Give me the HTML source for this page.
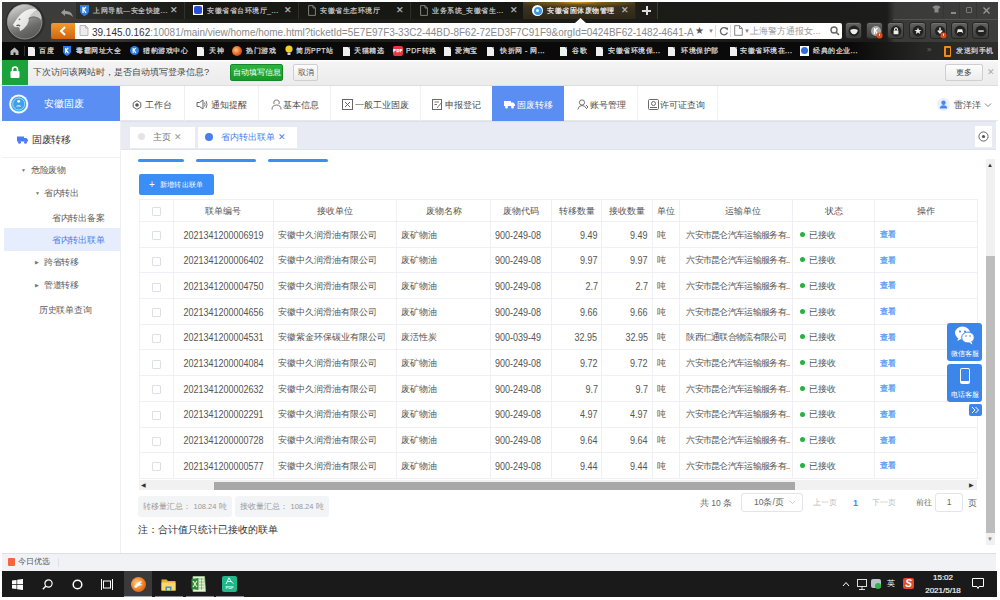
<!DOCTYPE html>
<html><head><meta charset="utf-8">
<style>
*{margin:0;padding:0;box-sizing:border-box}
html,body{width:1000px;height:600px;overflow:hidden;background:#fff;font-family:"Liberation Sans",sans-serif;}
.a{position:absolute}
/* chrome */
#chrome{left:2px;top:2px;width:996px;height:40px;background:linear-gradient(90deg,#41413f 0,#3c3c3a 90px,#262624 150px,#1e1e1b 200px,#1a1a17 600px,#1c1c1a 885px,#3a3a38 893px,#3e3e3c 996px)}
.tab{top:0;height:17px;-webkit-text-stroke:0.2px;background:rgba(12,12,10,0.3);border-right:1px solid rgba(255,255,255,0.1);color:#c8c8c8;font-size:7px;letter-spacing:0.5px;line-height:17px;white-space:nowrap;overflow:hidden}
.tab .x{position:absolute;right:6px;top:0;color:#bbb;font-size:9px;letter-spacing:0}
#bm{left:2px;top:42px;width:996px;height:18px;-webkit-text-stroke:0.25px;background:linear-gradient(90deg,#0a0a0a 0,#0a0a0a 850px,#262624 920px,#2e2e2c 996px);color:#d8d8d8;font-size:7px;letter-spacing:0.5px;line-height:18px;white-space:nowrap}
.bi{position:absolute;top:0}
.doc{position:absolute;top:5px;left:0;width:7px;height:9px;background:linear-gradient(225deg,#9a9a9a 0,#9a9a9a 1.8px,#f0f0f0 2px)}
#pw{left:2px;top:60px;width:996px;height:26px;background:linear-gradient(180deg,#fdfdfd 0,#fdfdfd 1px,#f5f4f4 2px,#ececec 24px);border-bottom:1px solid #dedede}
#hdr{left:2px;top:86px;width:996px;height:35px;background:#fff;border-bottom:1px solid #e4e7ee}
.nav{position:absolute;top:1.5px;height:35px;line-height:35px;font-size:9px;color:#4a4a4a;white-space:nowrap}
.sep{position:absolute;top:0;width:1px;height:35px;background:#f0f0f0}
#side{left:2px;top:121px;width:119px;height:432px;background:#fff;border-right:1px solid #eef0f3;z-index:2}
.si{position:absolute;font-size:9px;letter-spacing:-0.3px;color:#606060;white-space:nowrap;line-height:14px}
#main{left:120px;top:121px;width:876px;height:432px;background:#fff}
#tabs{left:0;top:0;width:876px;height:29px;background:#e8ebf3;box-shadow:inset 0 1px 1px #dde0e7,inset 0 -1px 1px #e0e3ea}
table{border-collapse:collapse;table-layout:fixed}
#status{left:2px;top:553px;width:994px;height:18px;background:#f1f2f6;border-top:1px solid #dcdfe5}
#task{left:2px;top:571px;width:995px;height:26px;background:#1a1a1a}

#tbl td{border:1px solid #eef0f5;height:25.7px;font-size:9px;color:#555;white-space:nowrap;overflow:hidden;padding:1.5px 4px 0 4px;text-overflow:clip}
#tbl tr.th td{height:22px;color:#555}
#tbl td.c{text-align:center}
#tbl .n{display:inline-block;font-size:10px;transform:scaleX(0.9);transform-origin:50% 50%}
#tbl td.r .n{transform-origin:100% 50%}
#tbl td.r{text-align:right}
#tbl td.cd{padding-left:4px}
#tbl td.cd .n{transform-origin:0 50%}
#tbl td.st{padding-left:7px}
#tbl td.ys{letter-spacing:-0.7px;padding-left:6px}
#tbl td.lk{color:#5a9cf6;font-size:7.5px;padding-left:5px;-webkit-text-stroke:0.35px}
.cb{display:inline-block;width:9px;height:9px;border:1px solid #dcdfe6;border-radius:1px;vertical-align:middle}
.dot{display:inline-block;width:5px;height:5px;border-radius:50%;background:#28b040;margin-right:4px;vertical-align:middle;margin-top:-2px}
</style></head><body>
<!-- browser chrome -->
<div id="chrome" class="a">
  <!-- logo -->
  <div class="a" style="left:0;top:0;width:73px;height:17px;background:#3c3c3a"></div>
  <div class="a" style="left:0;top:17px;width:49px;height:23px;background:#3a3a38"></div>
  <svg class="a" style="left:-2px;top:-2px" width="50" height="44" viewBox="0 0 50 44">
    <defs>
      <linearGradient id="lg" x1="0.15" y1="0.05" x2="0.55" y2="1"><stop offset="0" stop-color="#d2d2d0"/><stop offset="0.4" stop-color="#9a9a98"/><stop offset="0.75" stop-color="#6a6a68"/><stop offset="1" stop-color="#5a5a58"/></linearGradient>
      <linearGradient id="lh" x1="0" y1="0" x2="1" y2="1"><stop offset="0" stop-color="#ffffff"/><stop offset="1" stop-color="#d0d0ce"/></linearGradient>
    </defs>
    <circle cx="25.2" cy="22" r="19.6" fill="#2e2e2c"/>
    <circle cx="24.7" cy="21.7" r="17.3" fill="url(#lg)" stroke="#a5a5a3" stroke-width="0.7"/>
    <path d="M26 11 Q34 7.5 39 11.5 Q42 15 41 20.5 Q38 16.5 33 16.5 Q29 17 27 19.5 Z" fill="#c8c8c6"/>
    <path d="M13 24.8 L15 21.5 L18 17.3 L21.5 13.5 L25 11 L29.5 9 L34 8.5 L37 9.5 L34 11.5 L31 14.5 L29 18 L28.5 21.5 L27 25 L23.5 29 L20 31.2 L19.5 28 L18 26.8 L16 27.3 L14.3 26.5 Z" fill="url(#lh)"/>
    <path d="M28.5 18.5 Q34 15 40.5 19.5" stroke="#6a6a68" stroke-width="0.9" fill="none"/>
    <circle cx="19.5" cy="19.3" r="0.9" fill="#777"/>
    <path d="M16.5 25.8 Q18.5 24.3 20 26.2" stroke="#555" stroke-width="1.3" fill="none"/>
  </svg>
  <!-- back arrow -->
  <svg class="a" style="left:58px;top:6px" width="14" height="10" viewBox="0 0 14 10"><path d="M5 1 L1 4.5 L5 8 L5 6 C9 6 11 7 13 9 C12 5 10 3 5 3 Z" fill="#9a9a9a"/></svg>
  <!-- tabs -->
  <div class="a tab" style="left:74px;width:109px">
    <svg class="a" style="left:4px;top:3px" width="9" height="11" viewBox="0 0 9 11"><path d="M0 0 H9 V6 C9 9 4.5 11 4.5 11 C4.5 11 0 9 0 6Z" fill="#2f7de1"/><path d="M3 2 V8 M3 5 L6 2 M3.8 4.5 L6 8" stroke="#fff" stroke-width="1.3" fill="none"/></svg>
    <span class="a" style="left:17px;top:0">上网导航—安全快捷...</span><span class="x">&#x2715;</span></div>
  <div class="a tab" style="left:183px;width:114px">
    <div class="a" style="left:8px;top:3px;width:10px;height:10px;background:#fff"><div class="a" style="left:1px;top:1px;width:8px;height:8px;background:#2d4fd6;border-radius:2px"></div></div>
    <span class="a" style="left:22px;top:0">安徽省省台环境厅_...</span><span class="x">&#x2715;</span></div>
  <div class="a tab" style="left:297px;width:112px">
    <svg class="a" style="left:9px;top:3px" width="8" height="11" viewBox="0 0 8 11"><path d="M0.6 0.6H5L7.4 3V10.4H0.6Z" fill="none" stroke="#8a8a88" stroke-width="0.9"/><path d="M5 0.6V3H7.4" stroke="#8a8a88" stroke-width="0.9" fill="none"/></svg>
    <span class="a" style="left:21px;top:0">安徽省生态环境厅</span><span class="x">&#x2715;</span></div>
  <div class="a tab" style="left:409px;width:114px">
    <svg class="a" style="left:9px;top:3px" width="8" height="11" viewBox="0 0 8 11"><path d="M0.6 0.6H5L7.4 3V10.4H0.6Z" fill="none" stroke="#8a8a88" stroke-width="0.9"/><path d="M5 0.6V3H7.4" stroke="#8a8a88" stroke-width="0.9" fill="none"/></svg>
    <span class="a" style="left:21px;top:0">业务系统_安徽省生...</span><span class="x">&#x2715;</span></div>
  <div class="a tab" style="left:521px;width:113px;background:radial-gradient(ellipse 60px 6px at 50% 0,#d8a520 0,rgba(150,110,30,0.6) 40%,rgba(0,0,0,0) 100%),linear-gradient(180deg,#4a3c1c 0,#3a3020 6px,#2e2818 17px);border-right:1px solid #222;color:#f0f0f0">
    <div class="a" style="left:9px;top:3px;width:11px;height:11px;border-radius:50%;background:#fff"><div class="a" style="left:1.5px;top:1.5px;width:8px;height:8px;border-radius:50%;background:#3a9ae8"></div><div class="a" style="left:4px;top:4px;width:3px;height:3px;border-radius:50%;background:#dff"></div></div>
    <span class="a" style="left:24px;top:0">安徽省固体废物管理</span><span class="x">&#x2715;</span></div>
  <div class="a" style="left:634px;top:0;width:22px;height:17px;background:#1e1d18;border-right:1px solid #3a3a36"></div><div class="a" style="left:639px;top:3px;width:11px;height:11px"><div class="a" style="left:4.5px;top:1px;width:2px;height:9px;background:#ddd"></div><div class="a" style="left:1px;top:4.5px;width:9px;height:2px;background:#ddd"></div></div>
  <svg class="a" style="left:573px;top:16px" width="11" height="5" viewBox="0 0 11 5"><path d="M0 5L5.5 0L11 5Z" fill="#fff"/></svg>
  <!-- window controls -->
  <svg class="a" style="left:930px;top:3px" width="9" height="8" viewBox="0 0 9 8"><path d="M0.5 2L3 0.5H6L8.5 2L7.5 3.5H6.5V7.5H2.5V3.5H1.5Z" fill="#8a8a88"/></svg>
  <div class="a" style="left:941px;top:0;width:1px;height:16px;background:#353533"></div>
  <div class="a" style="left:949px;top:10px;width:5px;height:2px;background:#8a8a88"></div>
  <div class="a" style="left:957px;top:0;width:1px;height:16px;background:#353533"></div>
  <div class="a" style="left:964px;top:5px;width:6px;height:6px;border:1.5px solid #7a7a78;border-radius:1px"></div>
  <div class="a" style="left:974px;top:0;width:1px;height:16px;background:#353533"></div>
  <svg class="a" style="left:981px;top:5px" width="7" height="7" viewBox="0 0 7 7"><path d="M0.5 0.5L6.5 6.5M6.5 0.5L0.5 6.5" stroke="#9a9a98" stroke-width="1.3"/></svg>
  <!-- address row -->
  <div class="a" style="left:49px;top:21px;width:24px;height:16px;background:linear-gradient(180deg,#f39a2c,#d2650c);border-radius:2px 0 0 2px"></div>
  <svg class="a" style="left:56px;top:24px" width="10" height="10" viewBox="0 0 10 10"><path d="M7 1 L3 5 L7 9" stroke="#fff" stroke-width="2" fill="none"/></svg>
  <div class="a" style="left:73px;top:21px;width:767px;height:16px;background:#fff;border-radius:0 2px 2px 0"></div>
  <svg class="a" style="left:77px;top:23px" width="10" height="11" viewBox="0 0 10 11"><path d="M1 0.5H6.5L9 3V10.5H1Z" fill="#ececec" stroke="#aaa" stroke-width="0.8"/><path d="M6.5 0.5V3H9" stroke="#aaa" stroke-width="0.8" fill="none"/></svg>
  <div class="a" id="url" style="left:89.5px;top:22px;height:16px;line-height:16px;font-size:11px;color:#8a8a8a;white-space:nowrap;transform:scaleX(0.906);transform-origin:0 0"><span style="color:#333">39.145.0.162</span>:10081/main/view/home/home.html?ticketId=5E7E97F3-33C2-44BD-8F62-72ED3F7C91F9&amp;orgId=0424BF62-1482-4641-A</div>
    <div class="a" style="left:693px;top:21px;color:#555;font-size:10px;line-height:16px">&#x2605;</div>
  <div class="a" style="left:706px;top:21px;color:#888;font-size:6px;line-height:16px">&#x25BC;</div>
  <div class="a" style="left:713px;top:23px;width:1px;height:12px;background:#ddd"></div>
  <svg class="a" style="left:717px;top:24px" width="10" height="10" viewBox="0 0 10 10"><path d="M8 3.2A3.6 3.6 0 1 0 8.4 6.5" stroke="#666" stroke-width="1.3" fill="none"/><path d="M6.2 1.5L9.2 1.8L8.6 4.6Z" fill="#666"/></svg>
  <div class="a" style="left:728px;top:23px;width:1px;height:12px;background:#ddd"></div>
  <svg class="a" style="left:732px;top:23px" width="9" height="11" viewBox="0 0 9 11"><path d="M0.7 0.7H5.5L8.3 3.5V10.3H0.7Z" fill="#fff" stroke="#777" stroke-width="0.9"/><path d="M5.5 0.7V3.5H8.3" stroke="#777" stroke-width="0.9" fill="none"/></svg>
  <div class="a" style="left:742px;top:21px;color:#888;font-size:6px;line-height:16px">&#x25BC;</div>
  <div class="a" style="left:748px;top:21px;height:16px;line-height:16px;font-size:9px;color:#9a9a9a;white-space:nowrap">上海警方通报女...</div>
  <svg class="a" style="left:828px;top:24px" width="10" height="10" viewBox="0 0 10 10"><circle cx="4" cy="4" r="3" stroke="#666" stroke-width="1.4" fill="none"/><path d="M6.2 6.2 L9 9" stroke="#666" stroke-width="1.6"/></svg>
  <!-- toolbar buttons -->
  <div class="a" style="left:891px;top:17px;width:105px;height:1px;background:#545452"></div>
  <div class="a" style="left:843px;top:20px;width:17px;height:17px;border-radius:3px;background:linear-gradient(180deg,#626260,#3c3c3a);border:1px solid #262624;box-shadow:inset 0 1px 0 rgba(255,255,255,0.12)"><svg class="a" style="left:2px;top:2px" width="12" height="12" viewBox="-0.5 -0.5 11 11"><circle cx="5" cy="5" r="5" fill="#222"/><path d="M1.5 4 Q5 2.5 8.5 4 Q8 7.5 5 8 Q2 7.5 1.5 4Z" fill="#eee"/></svg></div>
  <div class="a" style="left:864px;top:20px;width:17px;height:17px;border-radius:3px;background:linear-gradient(180deg,#626260,#3c3c3a);border:1px solid #262624;box-shadow:inset 0 1px 0 rgba(255,255,255,0.12)"><svg class="a" style="left:3px;top:2px" width="14" height="14" viewBox="0 0 14 14"><circle cx="6" cy="6" r="5" fill="#aaa"/><path d="M4.5 3V9M4.5 6L7.5 3M5.3 5.5L7.5 9" stroke="#fff" stroke-width="1.2" fill="none"/><circle cx="9.5" cy="10.5" r="3" fill="#e04a1a"/><rect x="9" y="8.7" width="1" height="2.2" fill="#fff"/></svg></div>
  <div class="a" style="left:885px;top:20px;width:17px;height:17px;border-radius:3px;background:linear-gradient(180deg,#626260,#3c3c3a);border:1px solid #262624;box-shadow:inset 0 1px 0 rgba(255,255,255,0.12)"><svg class="a" style="left:2px;top:2px" width="12" height="12" viewBox="-0.5 -0.5 11 11"><circle cx="5" cy="5" r="5" fill="#222"/><rect x="2.8" y="4.5" width="4.4" height="3.5" fill="#eee"/><path d="M3.7 4.6V3.4A1.3 1.3 0 0 1 6.3 3.4V4.6" stroke="#eee" fill="none"/></svg></div>
  <div class="a" style="left:907px;top:20px;width:17px;height:17px;border-radius:3px;background:linear-gradient(180deg,#626260,#3c3c3a);border:1px solid #262624;box-shadow:inset 0 1px 0 rgba(255,255,255,0.12)"><svg class="a" style="left:2px;top:2px" width="12" height="12" viewBox="-0.5 -0.5 11 11"><circle cx="5" cy="5" r="5" fill="#222"/><path d="M5 1.8L5.9 4H8.2L6.4 5.4L7 7.8L5 6.4L3 7.8L3.6 5.4L1.8 4H4.1Z" fill="#eee"/></svg></div>
  <div class="a" style="left:928px;top:20px;width:17px;height:17px;border-radius:3px;background:linear-gradient(180deg,#626260,#3c3c3a);border:1px solid #262624;box-shadow:inset 0 1px 0 rgba(255,255,255,0.12)"><svg class="a" style="left:3px;top:2px" width="14" height="14" viewBox="0 0 14 14"><circle cx="6" cy="6" r="5" fill="#222"/><path d="M6 2.5V7M3.8 5.5L6 8L8.2 5.5" stroke="#eee" stroke-width="1.4" fill="none"/><circle cx="9.5" cy="10.5" r="3" fill="#e04a1a"/><rect x="9" y="8.7" width="1" height="2.2" fill="#fff"/></svg></div>
  <div class="a" style="left:949px;top:20px;width:17px;height:17px;border-radius:3px;background:linear-gradient(180deg,#626260,#3c3c3a);border:1px solid #262624;box-shadow:inset 0 1px 0 rgba(255,255,255,0.12)"><svg class="a" style="left:2px;top:2px" width="12" height="12" viewBox="-0.5 -0.5 11 11"><circle cx="5" cy="5" r="5" fill="#222"/><path d="M2 7L3 3.5H7L8 7L6.5 6H3.5Z" fill="#eee"/></svg></div>
  <div class="a" style="left:970px;top:20px;width:17px;height:17px;border-radius:3px;background:linear-gradient(180deg,#626260,#3c3c3a);border:1px solid #262624;box-shadow:inset 0 1px 0 rgba(255,255,255,0.12)"><svg class="a" style="left:2px;top:2px" width="12" height="12" viewBox="-0.5 -0.5 11 11"><circle cx="5" cy="5" r="5" fill="#222"/><rect x="2.5" y="4.3" width="5" height="1.5" fill="#ccc"/></svg></div>
</div>
<div id="bm" class="a">
  <svg class="a" style="left:8px;top:5px" width="9" height="8" viewBox="0 0 9 8"><path d="M0.5 4L4.5 0.5L8.5 4V8H5.5V5.5H3.5V8H0.5Z" fill="#bbb"/></svg>
  <div class="a" style="left:22px;top:4px;width:1px;height:10px;background:#333"></div>
  <div class="bi" style="left:26px"><i class="doc"></i></div><div class="bi" style="left:37px">百度</div>
  <svg class="a" style="left:61px;top:4px" width="8" height="10" viewBox="0 0 9 11"><path d="M0 0 H9 V6 C9 9 4.5 11 4.5 11 C4.5 11 0 9 0 6Z" fill="#2f7de1"/><path d="M3 2 V8 M3 5 L6 2 M3.8 4.5 L6 8" stroke="#fff" stroke-width="1.3" fill="none"/></svg>
  <div class="bi" style="left:74px">毒霸网址大全</div>
  <svg class="a" style="left:128px;top:4px" width="9" height="9" viewBox="0 0 10 10"><circle cx="5" cy="5" r="5" fill="#2f7de1"/><path d="M3.5 2.3V7.7M3.5 5L6.5 2.3M4.3 4.5L6.5 7.7" stroke="#fff" stroke-width="1.2" fill="none"/></svg>
  <div class="bi" style="left:141px">猎豹游戏中心</div>
  <div class="bi" style="left:195px"><i class="doc"></i></div><div class="bi" style="left:207px">天神</div>
  <div class="a" style="left:230px;top:4px;width:10px;height:10px;border-radius:50%;background:radial-gradient(circle at 40% 40%,#ffc27a,#e0551a 60%,#b03a10)"></div>
  <div class="bi" style="left:244px">热门游戏</div>
  <svg class="a" style="left:283px;top:3px" width="8" height="11" viewBox="0 0 8 11"><circle cx="4" cy="4" r="3.6" fill="#f5d020"/><rect x="2.5" y="7.5" width="3" height="2.5" fill="#ccc"/></svg>
  <div class="bi" style="left:294px">简历PPT站</div>
  <div class="bi" style="left:341px"><i class="doc"></i></div><div class="bi" style="left:352px">天猫精选</div>
  <div class="a" style="left:391px;top:4px;width:10px;height:10px;border-radius:2px;background:#e8383d;color:#fff;font-size:4px;line-height:10px;text-align:center;font-weight:bold">PDF</div>
  <div class="bi" style="left:404px">PDF转换</div>
  <div class="bi" style="left:442px"><i class="doc"></i></div><div class="bi" style="left:453px">爱淘宝</div>
  <div class="bi" style="left:485px"><i class="doc"></i></div><div class="bi" style="left:498px">快折网 - 网...</div>
  <div class="bi" style="left:558px"><i class="doc"></i></div><div class="bi" style="left:570px">谷歌</div>
  <div class="bi" style="left:594px"><i class="doc"></i></div><div class="bi" style="left:606px">安徽省环境保...</div>
  <div class="bi" style="left:666px"><i class="doc"></i></div><div class="bi" style="left:679px">环境保护部</div>
  <div class="bi" style="left:728px"><i class="doc"></i></div><div class="bi" style="left:738px">安徽省环境在...</div>
  <div class="a" style="left:798px;top:4px;width:9px;height:10px;background:#fff"><div class="a" style="left:1px;top:1px;width:7px;height:7px;border-radius:50%;background:#2d6fe0"></div></div>
  <div class="bi" style="left:811px">经典的企业...</div>
  <div class="a" style="left:925px;top:0;color:#555;font-size:8px;line-height:16px">&#x00BB;</div>
  <div class="a" style="left:942px;top:4px;width:7px;height:11px;border-radius:1px;background:#f08a1c"><div class="a" style="left:1.5px;top:1.5px;width:4px;height:7px;background:#3a2a10"></div></div>
  <div class="bi" style="left:954px">发送到手机</div>
</div>
<div id="pw" class="a">
  <div class="a" style="left:0;top:0;width:26px;height:25px;background:#1aa33a"></div>
  <svg class="a" style="left:8px;top:6px" width="10" height="12" viewBox="0 0 10 12"><rect x="0.5" y="5" width="9" height="7" rx="1" fill="#fff"/><path d="M2.5 5.5V3.5A2.5 2.5 0 0 1 7.5 3.5V5.5" stroke="#fff" stroke-width="1.6" fill="none"/></svg>
  <div class="a" style="left:31px;top:0;line-height:25px;font-size:9.3px;color:#444;white-space:nowrap">下次访问该网站时，是否自动填写登录信息?</div>
  <div class="a" style="left:228px;top:4px;width:53px;height:17px;background:linear-gradient(180deg,#2bb43f,#179a2c);border:1px solid #14882a;border-radius:2px;color:#fff;font-size:7.5px;line-height:15px;text-align:center;white-space:nowrap">自动填写信息</div>
  <div class="a" style="left:291px;top:4px;width:25px;height:17px;background:linear-gradient(180deg,#fdfdfd,#ececec);border:1px solid #cfcfcf;border-radius:2px;color:#555;font-size:7.5px;line-height:15px;text-align:center">取消</div>
  <div class="a" style="left:943px;top:4px;width:38px;height:17px;background:linear-gradient(180deg,#fdfdfd,#ececec);border:1px solid #cfcfcf;border-radius:2px;color:#444;font-size:8px;line-height:15px;text-align:center">更多</div>
  <div class="a" style="left:985px;top:0;line-height:25px;font-size:9px;color:#aaa">&#x2715;</div>
</div>
<div id="hdr" class="a">
  <div class="a" style="left:0;top:0;width:118px;height:35px;background:#5b8ef2"></div>
  <svg class="a" style="left:6px;top:8px" width="21" height="21" viewBox="0 0 21 21"><circle cx="10.7" cy="10" r="9.6" fill="#f4f8ff"/><circle cx="10.7" cy="10" r="7.6" fill="#3aa2ea"/><circle cx="10.7" cy="10" r="6" fill="none" stroke="#cfeaff" stroke-width="0.7"/><circle cx="10.7" cy="7.3" r="1.4" fill="#fff"/><path d="M7.8 12.5Q10.7 9.8 13.6 12.5Z" fill="#e8f4ff"/></svg>
  <div class="a" style="left:42px;top:0;line-height:35px;font-size:10px;color:#fff;white-space:nowrap">安徽固废</div>
  <div class="sep" style="left:182px"></div><div class="sep" style="left:256px"></div><div class="sep" style="left:328px"></div><div class="sep" style="left:418px"></div><div class="sep" style="left:635px"></div><div class="sep" style="left:715px"></div>
  <svg class="a" style="left:130px;top:14px" width="10" height="10" viewBox="0 0 10 10"><path d="M5 0.7L8.8 2.9V7.1L5 9.3L1.2 7.1V2.9Z" stroke="#666" stroke-width="1" fill="none"/><circle cx="5" cy="5" r="1.8" fill="#555"/></svg>
  <div class="nav" style="left:143px">工作台</div>
  <svg class="a" style="left:194px;top:13px" width="12" height="11" viewBox="0 0 12 11"><path d="M1 3.5H3.5L7 1V10L3.5 7.5H1Z" stroke="#666" stroke-width="1" fill="none"/><path d="M8.5 3.5Q9.7 5.5 8.5 7.5M10 2Q12 5.5 10 9" stroke="#666" stroke-width="0.9" fill="none"/></svg>
  <div class="nav" style="left:209px">通知提醒</div>
  <svg class="a" style="left:269px;top:13px" width="11" height="11" viewBox="0 0 11 11"><path d="M3 5Q2 1 5.5 1Q9 1 8 5M1 10.5Q1 6 5.5 6Q10 6 10 10.5" stroke="#6a6a6a" stroke-width="0.9" fill="none"/></svg>
  <div class="nav" style="left:281px">基本信息</div>
  <svg class="a" style="left:340px;top:13px" width="11" height="11" viewBox="0 0 11 11"><rect x="0.5" y="0.5" width="10" height="10" stroke="#666" fill="none"/><path d="M3 3L8 8M8 3L3 8" stroke="#666" stroke-width="1"/></svg>
  <div class="nav" style="left:353px">一般工业固废</div>
  <svg class="a" style="left:430px;top:13px" width="11" height="11" viewBox="0 0 11 11"><rect x="0.5" y="0.5" width="9" height="10" stroke="#6a6a6a" fill="none"/><path d="M2.5 3H7M2.5 5.5H5M5 9L10 3" stroke="#6a6a6a" stroke-width="0.9" fill="none"/></svg>
  <div class="nav" style="left:443px">申报登记</div>
  <div class="a" style="left:490px;top:0;width:72px;height:35px;background:#5b8ef2"></div>
  <svg class="a" style="left:502px;top:14px" width="11" height="9" viewBox="0 0 11 9"><rect x="0" y="1" width="7" height="5" fill="#fff"/><path d="M7 2.5H9.5L11 4.5V6H7Z" fill="#fff"/><circle cx="2.5" cy="7" r="1.5" fill="#fff"/><circle cx="8.5" cy="7" r="1.5" fill="#fff"/></svg>
  <div class="nav" style="left:515px;color:#fff">固废转移</div>
  <svg class="a" style="left:575px;top:13px" width="12" height="11" viewBox="0 0 12 11"><circle cx="5" cy="3.5" r="2.6" stroke="#666" stroke-width="0.9" fill="none"/><path d="M0.8 10.5Q1.5 6.5 5 6.5Q8 6.5 9 9M9 6L11 8L9 10" stroke="#666" stroke-width="0.9" fill="none"/></svg>
  <div class="nav" style="left:588px">账号管理</div>
  <svg class="a" style="left:646px;top:13px" width="11" height="11" viewBox="0 0 11 11"><rect x="0.5" y="0.5" width="10" height="10" rx="1" stroke="#6a6a6a" fill="none"/><circle cx="5.5" cy="4.5" r="2" stroke="#6a6a6a" fill="none"/><path d="M2 8.5H9" stroke="#6a6a6a"/></svg>
  <div class="nav" style="left:658px">许可证查询</div>
  <svg class="a" style="left:935px;top:12px" width="13" height="13" viewBox="0 0 13 13"><circle cx="6.5" cy="6.5" r="6.5" fill="#e8efff"/><circle cx="6.5" cy="4.8" r="2.2" fill="#4a84f0"/><path d="M2.8 10.5Q3 7.3 6.5 7.3Q10 7.3 10.2 10.5Z" fill="#4a84f0"/></svg>
  <div class="nav" style="left:952px">雷洋洋</div>
  <svg class="a" style="left:982px;top:16px" width="8" height="6" viewBox="0 0 8 6"><path d="M1 1.5L4 4.5L7 1.5" stroke="#777" stroke-width="0.9" fill="none"/></svg>
</div>
<div id="side" class="a">
  <svg class="a" style="left:15px;top:15px" width="11" height="8" viewBox="0 0 11 8"><rect x="0" y="0.5" width="7" height="5" fill="#4a7ef0"/><path d="M7 2H9.5L11 4V5.5H7Z" fill="#4a7ef0"/><circle cx="2.5" cy="6.3" r="1.5" fill="#4a7ef0"/><circle cx="8.5" cy="6.3" r="1.5" fill="#4a7ef0"/></svg>
  <div class="si" style="left:30px;top:12px;font-size:10px;color:#333">固废转移</div>
  <div class="a" style="left:0;top:36px;width:118px;height:1px;background:#eef0f3"></div>
  <div class="si" style="left:19px;top:42px;font-size:5px;color:#777">&#x25BC;</div>
  <div class="si" style="left:29px;top:42px">危险废物</div>
  <div class="si" style="left:33px;top:65px;font-size:5px;color:#777">&#x25BC;</div>
  <div class="si" style="left:42px;top:65px">省内转出</div>
  <div class="si" style="left:50px;top:90px">省内转出备案</div>
  <div class="a" style="left:2px;top:107px;width:116px;height:23px;background:#e6edfd"></div>
  <div class="si" style="left:50px;top:112px;color:#4a7ef0">省内转出联单</div>
  <div class="si" style="left:33px;top:134px;font-size:5px;color:#777">&#x25B6;</div>
  <div class="si" style="left:42px;top:134px">跨省转移</div>
  <div class="si" style="left:33px;top:157px;font-size:5px;color:#777">&#x25B6;</div>
  <div class="si" style="left:42px;top:157px">管道转移</div>
  <div class="si" style="left:37px;top:182px">历史联单查询</div>
</div>
<div id="main" class="a">
  <div id="tabs" class="a" style="left:0">
    <div class="a" style="left:10px;top:5.5px;width:65px;height:21px;background:#fff"></div>
    <div class="a" style="left:18px;top:12px;width:7px;height:7px;border-radius:50%;background:#e4e4e4"></div>
    <div class="a" style="left:33px;top:6px;line-height:20px;font-size:9px;color:#777">主页</div>
    <div class="a" style="left:54px;top:6px;line-height:20px;font-size:9px;color:#999">&#x2715;</div>
    <div class="a" style="left:78px;top:5.5px;width:99px;height:21px;background:#fff"></div>
    <div class="a" style="left:85px;top:12px;width:8px;height:8px;border-radius:50%;background:#4a7ef0"></div>
    <div class="a" style="left:101px;top:6px;line-height:20px;font-size:9px;color:#4a7ef0">省内转出联单</div>
    <div class="a" style="left:158px;top:6px;line-height:20px;font-size:9px;color:#4a7ef0">&#x2715;</div>
    <div class="a" style="left:855px;top:5px;width:17px;height:21px;background:#fff"></div>
    <svg class="a" style="left:858px;top:10px" width="11" height="11" viewBox="0 0 11 11"><circle cx="5.5" cy="5.5" r="4.6" stroke="#555" stroke-width="0.9" fill="none"/><circle cx="5.5" cy="5.5" r="1.6" fill="#555"/></svg>
  </div>
  <div class="a" style="left:18px;top:38px;width:46px;height:3px;border-radius:2px;background:#3a8ef6"></div>
  <div class="a" style="left:76px;top:38px;width:60px;height:3px;border-radius:2px;background:#3a8ef6"></div>
  <div class="a" style="left:148px;top:38px;width:60px;height:3px;border-radius:2px;background:#3a8ef6"></div>
  <div class="a" style="left:19px;top:53px;width:75px;height:21px;border-radius:2px;background:#3a8ef6;color:#fff;font-size:7px;letter-spacing:0.2px;line-height:21px;white-space:nowrap"><span class="a" style="left:10px;top:0;font-size:10px">+</span><span class="a" style="left:21px;top:0">新增转出联单</span></div>
  <table id="tbl" class="a" style="left:19px;top:78px;width:837.8px"><col style="width:34px"><col style="width:99.8px"><col style="width:123.5px"><col style="width:93.7px"><col style="width:61.4px"><col style="width:50.1px"><col style="width:50.3px"><col style="width:27.5px"><col style="width:112.5px"><col style="width:82.6px"><col style="width:102.4px"><tr class="th"><td class="c"><i class="cb"></i></td><td class="c">联单编号</td><td class="c">接收单位</td><td class="c">废物名称</td><td class="c">废物代码</td><td class="c">转移数量</td><td class="c">接收数量</td><td class="c">单位</td><td class="c" style="padding-left:18px">运输单位</td><td class="c">状态</td><td class="c">操作</td></tr><tr><td class="c"><i class="cb"></i></td><td class="c"><span class="n">2021341200006919</span></td><td>安徽中久润滑油有限公司</td><td>废矿物油</td><td class="cd"><span class="n">900-249-08</span></td><td class="r"><span class="n">9.49</span></td><td class="r"><span class="n">9.49</span></td><td>吨</td><td class="ys">六安市昆仑汽车运输服务有..</td><td class="st"><i class="dot"></i>已接收</td><td class="lk">查看</td></tr><tr><td class="c"><i class="cb"></i></td><td class="c"><span class="n">2021341200006402</span></td><td>安徽中久润滑油有限公司</td><td>废矿物油</td><td class="cd"><span class="n">900-249-08</span></td><td class="r"><span class="n">9.97</span></td><td class="r"><span class="n">9.97</span></td><td>吨</td><td class="ys">六安市昆仑汽车运输服务有..</td><td class="st"><i class="dot"></i>已接收</td><td class="lk">查看</td></tr><tr><td class="c"><i class="cb"></i></td><td class="c"><span class="n">2021341200004750</span></td><td>安徽中久润滑油有限公司</td><td>废矿物油</td><td class="cd"><span class="n">900-249-08</span></td><td class="r"><span class="n">2.7</span></td><td class="r"><span class="n">2.7</span></td><td>吨</td><td class="ys">六安市昆仑汽车运输服务有..</td><td class="st"><i class="dot"></i>已接收</td><td class="lk">查看</td></tr><tr><td class="c"><i class="cb"></i></td><td class="c"><span class="n">2021341200004656</span></td><td>安徽中久润滑油有限公司</td><td>废矿物油</td><td class="cd"><span class="n">900-249-08</span></td><td class="r"><span class="n">9.66</span></td><td class="r"><span class="n">9.66</span></td><td>吨</td><td class="ys">六安市昆仑汽车运输服务有..</td><td class="st"><i class="dot"></i>已接收</td><td class="lk">查看</td></tr><tr><td class="c"><i class="cb"></i></td><td class="c"><span class="n">2021341200004531</span></td><td>安徽紫金环保碳业有限公司</td><td>废活性炭</td><td class="cd"><span class="n">900-039-49</span></td><td class="r"><span class="n">32.95</span></td><td class="r"><span class="n">32.95</span></td><td>吨</td><td class="ys">陕西仁通联合物流有限公司</td><td class="st"><i class="dot"></i>已接收</td><td class="lk">查看</td></tr><tr><td class="c"><i class="cb"></i></td><td class="c"><span class="n">2021341200004084</span></td><td>安徽中久润滑油有限公司</td><td>废矿物油</td><td class="cd"><span class="n">900-249-08</span></td><td class="r"><span class="n">9.72</span></td><td class="r"><span class="n">9.72</span></td><td>吨</td><td class="ys">六安市昆仑汽车运输服务有..</td><td class="st"><i class="dot"></i>已接收</td><td class="lk">查看</td></tr><tr><td class="c"><i class="cb"></i></td><td class="c"><span class="n">2021341200002632</span></td><td>安徽中久润滑油有限公司</td><td>废矿物油</td><td class="cd"><span class="n">900-249-08</span></td><td class="r"><span class="n">9.7</span></td><td class="r"><span class="n">9.7</span></td><td>吨</td><td class="ys">六安市昆仑汽车运输服务有..</td><td class="st"><i class="dot"></i>已接收</td><td class="lk">查看</td></tr><tr><td class="c"><i class="cb"></i></td><td class="c"><span class="n">2021341200002291</span></td><td>安徽中久润滑油有限公司</td><td>废矿物油</td><td class="cd"><span class="n">900-249-08</span></td><td class="r"><span class="n">4.97</span></td><td class="r"><span class="n">4.97</span></td><td>吨</td><td class="ys">六安市昆仑汽车运输服务有..</td><td class="st"><i class="dot"></i>已接收</td><td class="lk">查看</td></tr><tr><td class="c"><i class="cb"></i></td><td class="c"><span class="n">2021341200000728</span></td><td>安徽中久润滑油有限公司</td><td>废矿物油</td><td class="cd"><span class="n">900-249-08</span></td><td class="r"><span class="n">9.64</span></td><td class="r"><span class="n">9.64</span></td><td>吨</td><td class="ys">六安市昆仑汽车运输服务有..</td><td class="st"><i class="dot"></i>已接收</td><td class="lk">查看</td></tr><tr><td class="c"><i class="cb"></i></td><td class="c"><span class="n">2021341200000577</span></td><td>安徽中久润滑油有限公司</td><td>废矿物油</td><td class="cd"><span class="n">900-249-08</span></td><td class="r"><span class="n">9.44</span></td><td class="r"><span class="n">9.44</span></td><td>吨</td><td class="ys">六安市昆仑汽车运输服务有..</td><td class="st"><i class="dot"></i>已接收</td><td class="lk">查看</td></tr></table>
  <!-- h scrollbar -->
  <div class="a" style="left:19px;top:359px;width:838px;height:10px;background:#f1f1f1"></div>
  <div class="a" style="left:94px;top:361px;width:581px;height:8px;background:#a8a8a8"></div>
  <div class="a" style="left:21px;top:359px;font-size:6px;line-height:11px;color:#333">&#x25C0;</div>
  <div class="a" style="left:849px;top:359px;font-size:6px;line-height:11px;color:#333">&#x25B6;</div>
  <!-- summary -->
  <div class="a" style="left:18px;top:375px;width:94px;height:21px;background:#f3f4f6;border-radius:3px;font-size:7.5px;line-height:21px;color:#999;text-align:center;white-space:nowrap">转移量汇总： 108.24 吨</div>
  <div class="a" style="left:115px;top:375px;width:94px;height:21px;background:#f3f4f6;border-radius:3px;font-size:7.5px;line-height:21px;color:#999;text-align:center;white-space:nowrap">接收量汇总： 108.24 吨</div>
  <div class="a" style="left:18px;top:402px;font-size:9.5px;line-height:14px;color:#333;white-space:nowrap">注：合计值只统计已接收的联单</div>
  <!-- pagination -->
  <div class="a" style="left:580px;top:375px;font-size:8.5px;line-height:14px;color:#666;white-space:nowrap">共 10 条</div>
  <div class="a" style="left:621px;top:372px;width:62px;height:19px;border:1px solid #e2e4ea;border-radius:3px;font-size:8.5px;line-height:17px;color:#666;padding-left:12px;white-space:nowrap">10条/页</div>
  <svg class="a" style="left:669px;top:379px" width="7" height="5" viewBox="0 0 7 5"><path d="M1 1L3.5 3.5L6 1" stroke="#bbb" stroke-width="0.8" fill="none"/></svg>
  <div class="a" style="left:693px;top:375px;font-size:7.5px;line-height:14px;color:#bbb;white-space:nowrap">上一页</div>
  <div class="a" style="left:733px;top:375px;font-size:9px;line-height:14px;color:#3a8ef6;font-weight:bold">1</div>
  <div class="a" style="left:752px;top:375px;font-size:7.5px;line-height:14px;color:#bbb;white-space:nowrap">下一页</div>
  <div class="a" style="left:796px;top:375px;font-size:7.5px;line-height:14px;color:#666;white-space:nowrap">前往</div>
  <div class="a" style="left:815px;top:372px;width:28px;height:19px;border:1px solid #e2e4ea;border-radius:3px;font-size:8.5px;line-height:17px;color:#666;text-align:center">1</div>
  <div class="a" style="left:848px;top:375px;font-size:8.5px;line-height:14px;color:#666">页</div>
  <!-- v scrollbar -->
  <div class="a" style="left:866px;top:38px;width:9px;height:386px;background:#f1f1f1"></div>
  <div class="a" style="left:866px;top:135px;width:9px;height:277px;background:#bdbdbd"></div>
  <div class="a" style="left:867px;top:40px;font-size:6px;line-height:8px;color:#333">&#x25B2;</div>
  <div class="a" style="left:867px;top:414px;font-size:6px;line-height:8px;color:#888">&#x25BC;</div>
  <!-- floating service -->
  <div class="a" style="left:827px;top:202px;width:35px;height:38px;border-radius:3px;background:#3b86e8"></div>
  <svg class="a" style="left:834px;top:204px" width="22" height="21" viewBox="0 0 22 21"><ellipse cx="8.5" cy="8" rx="7.5" ry="6.5" fill="#fff"/><path d="M4 13L3.5 16L7 14Z" fill="#fff"/><ellipse cx="14" cy="12.5" rx="6.3" ry="5.5" fill="#fff" stroke="#3a82ef" stroke-width="1"/><path d="M17.5 17L18.5 19.5L15 17.5Z" fill="#fff"/><circle cx="6" cy="6.5" r="1" fill="#3a82ef"/><circle cx="11" cy="6.5" r="1" fill="#3a82ef"/><circle cx="12" cy="11" r="0.8" fill="#3a82ef"/><circle cx="16" cy="11" r="0.8" fill="#3a82ef"/></svg>
  <div class="a" style="left:827px;top:228px;width:35px;font-size:6.5px;line-height:10px;color:#fff;text-align:center;white-space:nowrap">微信客服</div>
  <div class="a" style="left:827px;top:243px;width:35px;height:38px;border-radius:3px;background:#3b86e8"></div>
  <div class="a" style="left:840px;top:247px;width:10px;height:16px;border:1.5px solid #fff;border-bottom-width:3px;border-radius:2px"></div>
  <div class="a" style="left:827px;top:269px;width:35px;font-size:6.5px;line-height:10px;color:#fff;text-align:center;white-space:nowrap">电话客服</div>
  <div class="a" style="left:849px;top:283px;width:13px;height:12px;border-radius:2px;background:#3b86e8"></div><svg class="a" style="left:851px;top:285px" width="9" height="8" viewBox="0 0 9 8"><path d="M1 1L4 4L1 7M4.5 1L7.5 4L4.5 7" stroke="#fff" stroke-width="1" fill="none"/></svg>
</div>
<div id="status" class="a">
  <div class="a" style="left:6px;top:4px;width:7px;height:8px;background:#f2683a;border-radius:1px"></div>
  <div class="a" style="left:16px;top:0;line-height:16px;font-size:7.5px;color:#555;white-space:nowrap">今日优选</div>
  <div class="a" style="left:56px;top:4px;width:1px;height:9px;background:#dde"></div>
</div>
<div id="task" class="a">
  <svg class="a" style="left:10px;top:8px" width="11" height="11" viewBox="0 0 11 11"><path d="M0 1.5L4.5 0.9V5.2H0ZM5.2 0.8L11 0V5.2H5.2ZM0 5.9H4.5V10.1L0 9.5ZM5.2 5.9H11V11L5.2 10.2Z" fill="#fff"/></svg>
  <svg class="a" style="left:40px;top:8px" width="11" height="11" viewBox="0 0 11 11"><circle cx="6.5" cy="4.5" r="3.6" stroke="#fff" stroke-width="1.2" fill="none"/><path d="M4 7L0.8 10.2" stroke="#fff" stroke-width="1.4"/></svg>
  <svg class="a" style="left:70px;top:8px" width="11" height="11" viewBox="0 0 11 11"><circle cx="5.5" cy="5.5" r="4.3" stroke="#fff" stroke-width="1.5" fill="none"/></svg>
  <svg class="a" style="left:99px;top:8px" width="12" height="11" viewBox="0 0 12 11"><rect x="2.5" y="2" width="7" height="7" stroke="#fff" stroke-width="1" fill="none"/><path d="M0.5 0V11M11.5 0V11" stroke="#fff" stroke-width="1"/></svg>
  <div class="a" style="left:122px;top:0;width:28px;height:26px;background:#3a3a3a"></div>
  <div class="a" style="left:129px;top:6px;width:15px;height:15px;border-radius:50%;background:radial-gradient(circle at 40% 40%,#ffd08a,#f07a1e 55%,#c04a10)"></div>
  <svg class="a" style="left:131px;top:9px" width="11" height="9" viewBox="0 0 11 9"><path d="M1 7Q3 2 9 1L7 4L10 5Q5 5 3 8Z" fill="#fff"/></svg>
  <div class="a" style="left:122px;top:25px;width:28px;height:1px;background:#9ab"></div>
  <svg class="a" style="left:159px;top:7px" width="15" height="13" viewBox="0 0 15 13"><path d="M0.5 1.5H5.5L7 3H14.5V12.5H0.5Z" fill="#e8b430"/><path d="M0.5 4.5H14.5V12.5H0.5Z" fill="#fdd868"/><path d="M4.5 12.5V8.5H10.5V12.5H9V10H6V12.5Z" fill="#3b8de6"/></svg>
  <div class="a" style="left:153px;top:25px;width:28px;height:1px;background:#889"></div>
  <svg class="a" style="left:189px;top:5px" width="15" height="16" viewBox="0 0 15 16"><path d="M2 0.5H13.5L14.5 15.5H2Z" fill="#e6f2d8" stroke="#9fcf8a" stroke-width="0.8"/><path d="M8 3H13M8 6H13M8 9H13M8 12H13M10.5 2V14" stroke="#5aa050" stroke-width="0.6"/><path d="M0.5 3L7.5 2V14L0.5 13Z" fill="#2e8a3a"/><path d="M2 5L6 11M6 5L2 11" stroke="#e6f2d8" stroke-width="1.2"/></svg>
  <div class="a" style="left:184px;top:25px;width:28px;height:1px;background:#889"></div>
  <div class="a" style="left:220px;top:5px;width:15px;height:16px;background:#1fb88a;border-radius:2px;color:#dff;font-size:4px;line-height:23px;text-align:center;font-weight:bold">PDF</div>
  <svg class="a" style="left:223px;top:6px" width="9" height="8" viewBox="0 0 9 8"><path d="M4 0.8C3 2.5 2.5 4.5 1 7M4 0.8C5 3 6 4.5 8.2 6.5M2.5 4.5H6.5" stroke="#fff" stroke-width="1" fill="none"/></svg>
  <div class="a" style="left:214px;top:25px;width:28px;height:1px;background:#889"></div>
  <svg class="a" style="left:840px;top:10px" width="8" height="6" viewBox="0 0 8 6"><path d="M1 5L4 1.5L7 5" stroke="#fff" stroke-width="1" fill="none"/></svg>
  <svg class="a" style="left:855px;top:8px" width="11" height="11" viewBox="0 0 11 11"><rect x="0.5" y="0.5" width="9" height="7" stroke="#ddd" fill="none"/><path d="M5 8V10M2 10.5H8" stroke="#ddd"/></svg>
  <div class="a" style="left:869px;top:8px;width:10px;height:9px;border-radius:2px;background:#b8c4c8"><div class="a" style="left:4px;top:4px;width:6px;height:6px;border-radius:50%;background:#2fb44a"></div></div>
  <div class="a" style="left:885px;top:5px;line-height:16px;font-size:8px;color:#fff">英</div>
  <div class="a" style="left:901px;top:7px;width:11px;height:11px;background:#e8492a;border-radius:2px;color:#fff;font-size:10px;line-height:11px;text-align:center;font-weight:bold;font-style:italic">S</div>
  <div class="a" style="left:921px;top:2px;width:40px;line-height:10px;font-size:8px;color:#f4f4f4;text-align:center;-webkit-text-stroke:0.2px">15:02</div>
  <div class="a" style="left:919px;top:15px;width:44px;line-height:10px;font-size:8px;color:#f4f4f4;text-align:center;-webkit-text-stroke:0.2px">2021/5/18</div>
  <svg class="a" style="left:970px;top:7px" width="12" height="12" viewBox="0 0 12 12"><path d="M0.5 0.5H11.5V8.5H7L6 10.5L5 8.5H0.5Z" stroke="#fff" stroke-width="1" fill="none"/></svg>
</div>
</body></html>
